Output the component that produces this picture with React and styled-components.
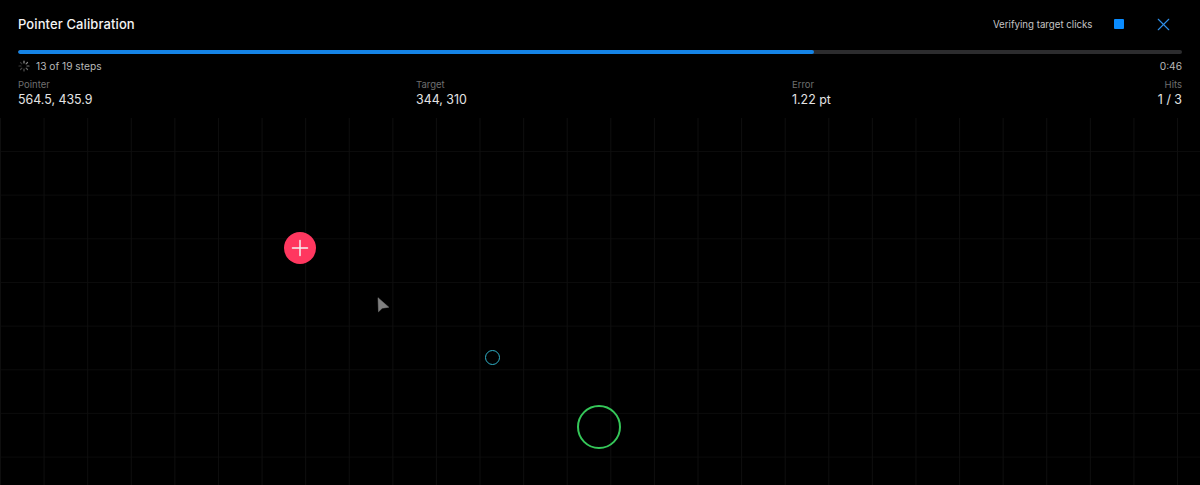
import styled, { createGlobalStyle } from "styled-components";
import { X } from "lucide-react";

const GlobalStyle = createGlobalStyle`
  html, body { margin: 0; padding: 0; background: #000; }
  body { font-family: Inter, "Liberation Sans", sans-serif; }
`;

const Page = styled.div`
  width: 1200px;
  height: 485px;
  background: #000;
  color: #fff;
  display: flex;
  flex-direction: column;
  overflow: hidden;
`;
const Header = styled.header`
  display: flex;
  flex-direction: column;
  height: 118px;
  box-sizing: border-box;
  padding: 0 18px;
`;
const TopBar = styled.div`
  display: flex;
  align-items: center;
  justify-content: space-between;
  height: 50px;
  padding-bottom: 2px;
  box-sizing: border-box;
`;
const Title = styled.h1`
  margin: 0;
  font-size: 13px;
  font-weight: 500;
  letter-spacing: 0.1px;
  color: #f4f4f4;
`;
const Actions = styled.div`
  display: flex;
  align-items: center;
`;
const Status = styled.span`
  font-size: 9.7px;
  color: #c4c4c4;
`;
const StopButton = styled.div`
  width: 10px;
  height: 10px;
  margin-left: 21px;
  background: #0a8cff;
  border-radius: 1px;
`;
const CloseButton = styled.div`
  display: flex;
  margin-left: 29px;
  margin-right: 8.5px;
  color: #2f8fe8;
`;
const Track = styled.div`
  height: 3.5px;
  background: #2c2c2e;
  border-radius: 2px;
  overflow: hidden;
`;
const Fill = styled.div`
  height: 100%;
  background: #1584e6;
  border-radius: 2px;
`;
const StepRow = styled.div`
  display: flex;
  align-items: center;
  justify-content: space-between;
  height: 14px;
  margin-top: 5.5px;
  font-size: 10.2px;
  color: #b8b8b8;
`;
const Steps = styled.div`
  display: flex;
  align-items: center;
  gap: 6px;
`;
const Stats = styled.div`
  display: flex;
  margin-top: 6px;
`;
const Stat = styled.div`
  width: ${(p) => p.$width}px;
  flex: ${(p) => (p.$width ? "none" : 1)};
  text-align: ${(p) => p.$align || "left"};
`;
const StatLabel = styled.div`
  font-size: 9.5px;
  line-height: 12px;
  color: #6f6f6f;
`;
const StatValue = styled.div`
  font-size: 12.4px;
  line-height: 16px;
  margin-top: 1px;
  color: #e4e4e4;
`;
const Canvas = styled.div`
  position: relative;
  flex: 1;
  background-color: #000;
  background-image:
    linear-gradient(to right, #0e0e0e 1px, transparent 1px),
    linear-gradient(to bottom, #0b0b0b 1px, transparent 1px);
  background-size: 43.6px 43.67px;
  background-position: 0 33px;
`;
const Marker = styled.div`
  position: absolute;
  left: ${(p) => p.$x - p.$size / 2}px;
  top: ${(p) => p.$y - 118 - p.$size / 2}px;
  width: ${(p) => p.$size}px;
  height: ${(p) => p.$size}px;
  box-sizing: border-box;
  border-radius: 50%;
`;
const HitTarget = styled(Marker)`
  border: 2px solid #35c759;
`;
const PointerDot = styled(Marker)`
  border: 1.5px solid #30b0c7;
`;
const PlusDot = styled(Marker)`
  background: #ff375f;
  display: flex;
  align-items: center;
  justify-content: center;
`;
const Cursor = styled.svg`
  position: absolute;
  left: 376px;
  top: ${296 - 118}px;
`;

const Spinner = () => (
  <svg width="12" height="12" viewBox="0 0 12 12" stroke="#a8a8a8" strokeWidth="1.2" strokeLinecap="round">
    <path d="M6 1v2" opacity=".9" />
    <path d="M9.5 2.5 8.1 3.9" opacity=".8" />
    <path d="M11 6H9" opacity=".7" />
    <path d="M9.5 9.5 8.1 8.1" opacity=".6" />
    <path d="M6 11V9" opacity=".5" />
    <path d="M2.5 9.5 3.9 8.1" opacity=".4" />
    <path d="M1 6h2" opacity=".35" />
    <path d="M2.5 2.5 3.9 3.9" opacity=".3" />
  </svg>
);

const App = () => (
  <Page>
    <GlobalStyle />
    <Header>
      <TopBar>
        <Title>Pointer Calibration</Title>
        <Actions>
          <Status>Verifying target clicks</Status>
          <StopButton />
          <CloseButton>
            <X size={21} strokeWidth={1.3} />
          </CloseButton>
        </Actions>
      </TopBar>
      <Track>
        <Fill style={{ width: `${(13 / 19) * 100}%` }} />
      </Track>
      <StepRow>
        <Steps>
          <Spinner />
          <span>13 of 19 steps</span>
        </Steps>
        <span>0:46</span>
      </StepRow>
      <Stats>
        <Stat $width={398}>
          <StatLabel>Pointer</StatLabel>
          <StatValue>564.5, 435.9</StatValue>
        </Stat>
        <Stat $width={376}>
          <StatLabel>Target</StatLabel>
          <StatValue>344, 310</StatValue>
        </Stat>
        <Stat>
          <StatLabel>Error</StatLabel>
          <StatValue>1.22 pt</StatValue>
        </Stat>
        <Stat $align="right">
          <StatLabel>Hits</StatLabel>
          <StatValue>1 / 3</StatValue>
        </Stat>
      </Stats>
    </Header>
    <Canvas>
      <PlusDot $x={300} $y={248} $size={32}>
        <svg width="18" height="18" viewBox="0 0 18 18" stroke="#f4f4f4" strokeWidth="1.5" strokeLinecap="round">
          <path d="M9 1.5v15M1.5 9h15" />
        </svg>
      </PlusDot>
      <Cursor width="14" height="17" viewBox="0 0 14 17">
        <path d="M2 1.7 12.8 11.2 6.2 12.2 2.5 15.8Z" fill="#808080" stroke="#808080" strokeWidth="0.5" strokeLinejoin="round" />
      </Cursor>
      <PointerDot $x={492} $y={357.5} $size={15} />
      <HitTarget $x={599} $y={427} $size={44} />
    </Canvas>
  </Page>
);

export default App;
